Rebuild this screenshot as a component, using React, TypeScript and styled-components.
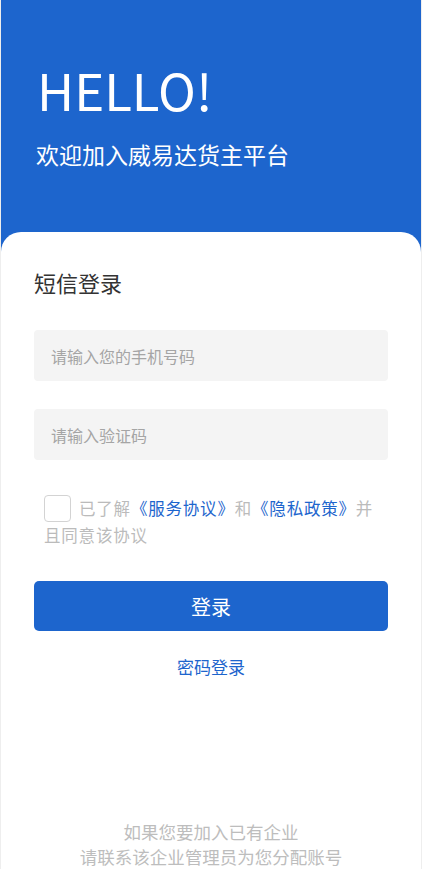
import styled, { createGlobalStyle } from "styled-components";

const GlobalStyle = createGlobalStyle`
  html, body {
    margin: 0;
    padding: 0;
    background: #ffffff;
  }
  body {
    font-family: "Noto Sans CJK SC", "Noto Sans", sans-serif;
  }
  * {
    box-sizing: border-box;
  }
`;

const BLUE = "#1d65cd";

const App = () => {
  return (
    <>
      <GlobalStyle />
      <Page>
        <Header>
          <Hello>HELLO!</Hello>
          <Welcome>欢迎加入威易达货主平台</Welcome>
        </Header>
        <Card>
          <Title>短信登录</Title>
          <Field placeholder="请输入您的手机号码" />
          <Field placeholder="请输入验证码" />
          <Agreement>
            <CheckBox type="checkbox" />
            已了解<Link>《服务协议》</Link>和<Link>《隐私政策》</Link>并且同意该协议
          </Agreement>
          <LoginButton>登录</LoginButton>
          <SwitchLink>密码登录</SwitchLink>
          <Footer>
            <div>如果您要加入已有企业</div>
            <div>请联系该企业管理员为您分配账号</div>
          </Footer>
        </Card>
      </Page>
    </>
  );
};

const Page = styled.div`
  display: flex;
  flex-direction: column;
  min-height: 100vh;
  background: ${BLUE};
  border-left: 1px solid #eeeeee;
  border-right: 1px solid #eeeeee;
`;

const Header = styled.div`
  height: 232px;
  padding: 58px 0 0 36px;
  color: #ffffff;
`;

const Hello = styled.h1`
  margin: 0;
  font-family: "Noto Sans CJK SC", sans-serif;
  font-size: 51px;
  font-weight: 400;
  line-height: 62px;
`;

const Welcome = styled.div`
  margin-top: 18px;
  margin-left: -1px;
  font-size: 23px;
  line-height: 32px;
`;

const Card = styled.div`
  flex: 1;
  display: flex;
  flex-direction: column;
  background: #ffffff;
  border-radius: 20px 20px 0 0;
  padding: 34px 33px 0 33px;
`;

const Title = styled.div`
  font-size: 22px;
  line-height: 32px;
  color: #333333;
  margin-bottom: 32px;
`;

const Field = styled.input`
  width: 100%;
  height: 51px;
  border: none;
  outline: none;
  border-radius: 4px;
  background: #f4f4f4;
  padding: 0 17px;
  margin-bottom: 28px;
  font-family: "Noto Sans CJK SC", sans-serif;
  font-size: 16px;
  color: #333333;

  &::placeholder {
    color: #a5a5a5;
  }
`;

const Agreement = styled.div`
  padding: 7px 0 0 10px;
  font-size: 16.5px;
  line-height: 26px;
  letter-spacing: 0.8px;
  color: #bbbbbb;
`;

const CheckBox = styled.input`
  appearance: none;
  width: 27px;
  height: 27px;
  margin: 0 8px 0 0;
  border: 1px solid #d3d3d3;
  border-radius: 4px;
  background: #ffffff;
  vertical-align: -7px;
`;

const Link = styled.span`
  color: ${BLUE};
`;

const LoginButton = styled.button`
  margin-top: 33px;
  height: 50px;
  width: 100%;
  border: none;
  border-radius: 5px;
  background: ${BLUE};
  color: #ffffff;
  font-family: "Noto Sans CJK SC", sans-serif;
  font-size: 20px;
`;

const SwitchLink = styled.div`
  margin-top: 24px;
  text-align: center;
  font-size: 17px;
  line-height: 24px;
  color: ${BLUE};
`;

const Footer = styled.div`
  margin-top: auto;
  text-align: center;
  font-size: 17.5px;
  line-height: 25px;
  color: #bdbdbd;
`;

export default App;
